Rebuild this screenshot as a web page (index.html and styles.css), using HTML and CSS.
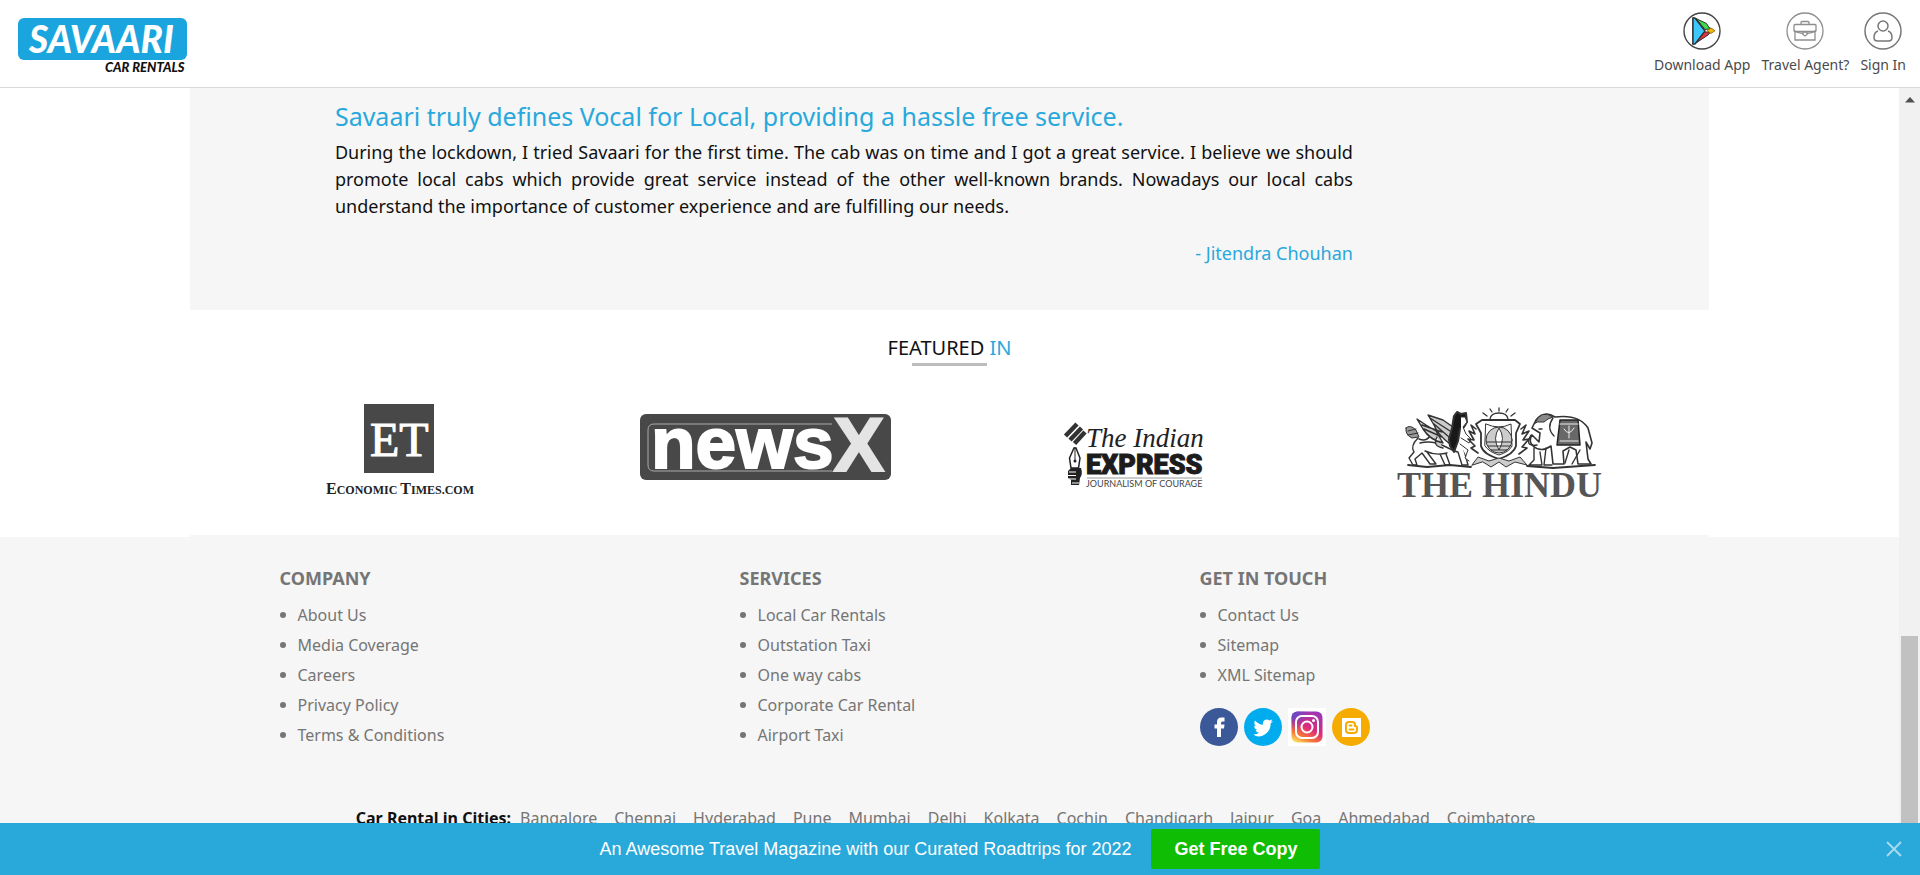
FILE: index.html
```html
<!DOCTYPE html>
<html lang="en">
<head>
<meta charset="utf-8">
<meta name="viewport" content="width=device-width, initial-scale=1">
<title>Savaari Car Rentals</title>
<link rel="stylesheet" href="styles.css">
</head>
<body>
<header class="topbar">
  <a class="brand" href="#" aria-label="Savaari Car Rentals">
    <svg width="172" height="60" viewBox="0 0 172 60">
      <rect x="2" y="3" width="169" height="42" rx="6" fill="#1ba5de"/>
      <text class="brand-name" x="13" y="38">SAVAARI</text>
      <text class="brand-sub" x="89" y="57">CAR RENTALS</text>
    </svg>
  </a>
  <nav class="topnav">
    <a class="topnav-link" href="#">
      <svg width="38" height="38" viewBox="0 0 38 38" fill="none" stroke-linejoin="round">
        <circle cx="19" cy="19" r="18" fill="#fff" stroke="#444" stroke-width="1.4"/>
        <path d="M10 6 30 18.500 10 32Z" fill="#fff" stroke="#333" stroke-width="1.500"/>
        <path d="M13 6.500 23.500 11.500 27 17 22 17.500Z" fill="#3ddc50" stroke="#333"/>
        <path d="M13 31 25 23 27 20 21 20Z" fill="#e5343d" stroke="#333"/>
        <path d="M10 6 12 6 22 19 12 32 10 32Z" fill="#3cc8ff" stroke="#333" stroke-width="1.400"/>
        <path d="M24 18.500 28 16 32 18.800 28 21.500Z" fill="#f5b800" stroke="#8a6a10" stroke-width=".8"/>
      </svg>
      <span>Download App</span>
    </a>
    <a class="topnav-link" href="#">
      <svg width="38" height="38" viewBox="0 0 38 38" fill="none" stroke="#8e8e8e" stroke-width="1.300">
        <circle cx="19" cy="19" r="18"/>
        <path d="M15 12V10.500Q15 9.500 16 9.500H22Q23 9.500 23 10.500V12"/>
        <rect x="8" y="12.500" width="22" height="7" rx="1"/>
        <path d="M9 20V28H29V20M8 18.500Q12 21.500 17 21.500M21 21.500Q26 21.500 30 18.500"/>
        <path d="M17 20H21V22.500L19 24 17 22.500Z"/>
      </svg>
      <span>Travel Agent?</span>
    </a>
    <a class="topnav-link" href="#">
      <svg width="38" height="38" viewBox="0 0 38 38" fill="none" stroke="#777" stroke-width="1.500">
        <circle cx="19" cy="19" r="18"/>
        <circle cx="19" cy="14" r="5"/>
        <path d="M14 19C11 20 10 22.500 10 25.500Q10 29 13.500 29H24.500Q28 29 28 25.500C28 22.500 27 20 24 19"/>
      </svg>
      <span>Sign In</span>
    </a>
  </nav>
</header>

<div class="viewport">
  <div class="page">
    <main class="panel">
      <section class="review">
        <div class="review-body">
          <h3 class="review-title">Savaari truly defines Vocal for Local, providing a hassle free service.</h3>
          <p class="review-text">During the lockdown, I tried Savaari for the first time. The cab was on time and I got a great service. I believe we should promote local cabs which provide great service instead of the other well-known brands. Nowadays our local cabs understand the importance of customer experience and are fulfilling our needs.</p>
          <p class="review-author">- Jitendra Chouhan</p>
        </div>
      </section>
      <section class="featured">
        <h2 class="featured-title">FEATURED <span class="accent">IN</span></h2>
        <div class="featured-logos">
          <svg width="260" height="106" viewBox="0 0 260 106" role="img" aria-label="Economic Times">
            <rect x="95" y="4" width="70" height="69" fill="#484848"/>
            <text class="et" x="101" y="56">ET</text>
            <text class="et-word" x="57" y="94"><tspan class="cap">E</tspan>CONOMIC <tspan class="cap">T</tspan>IMES.COM</text>
          </svg>
          <svg width="260" height="106" viewBox="0 0 260 106" role="img" aria-label="NewsX">
            <rect x="4" y="14" width="251" height="66" rx="6" fill="#484848"/>
            <path d="M196 24H18Q12 24 12 30V65Q12 71 18 71H196" fill="none" stroke="#aaa"/>
            <text class="newsx" x="15" y="68">news<tspan class="newsx-x" y="71">X</tspan></text>
          </svg>
          <svg width="260" height="106" viewBox="0 0 260 106" role="img" aria-label="The Indian Express">
            <g stroke="#333" stroke-width="4.500" fill="none">
              <path d="M62.500 36 74 24M67 40 78.500 28M71.500 43.500 82 32"/>
            </g>
            <path d="M73 48 77 58 75.500 68H68L66.500 58 71 48Z" fill="#fff" stroke="#222" stroke-width="1.500"/>
            <path d="M72 47V60" stroke="#222"/><circle cx="72" cy="61" r="1.500" fill="#222"/>
            <path d="M68 68H78Q80 74 77 78L76 85H68V80L65 78V71Z" fill="#222"/>
            <path d="M66 72H73M65 75.500H73M66 79H73M69 83H76" stroke="#fff"/>
            <text class="ie-top" x="83" y="47">The Indian</text>
            <text class="ie-main" x="83" y="74">EXPRESS</text>
            <path d="M84 78H199" stroke="#999"/>
            <text class="ie-sub" x="83" y="87">JOURNALISM OF COURAGE</text>
          </svg>
          <svg width="260" height="106" viewBox="0 0 260 106" role="img" aria-label="The Hindu">
            <g fill="none" stroke="#333" stroke-linecap="round" stroke-linejoin="round">
              <!-- winged figure -->
              <path d="M36 28Q40 24 46 30L49 37 42 38Q35 35 36 28Z" fill="#999"/>
              <path d="M38 31 46 29M38 35 48 33"/>
              <path d="M49 39Q56 42 60 36M48 38Q40 46 44 52L39 58 43 65H47L45 59 52 53 60 64H66L57 52M50 43Q62 40 74 46T88 52L92 65H98L94 50M70 54 75 65H80L76 54M55 51Q66 56 77 53" stroke-width="1.400"/>
              <path d="M47 19 56 25 66 31 73 43Q60 40 53 29ZM58 15 73 20 83 27 80 44Q68 35 64 25ZM52 25 72 32M54 29 72 37M60 18 80 31M64 24 79 37M67 37Q62 46 73 48" fill="#ccc" stroke-width="1.400"/>
              <path d="M84 16 87 12 91 14 96 13 97 22 94 27 90 29 88 41 84 52 80 46 79 39 82 28Z" fill="#181818" stroke-width="2"/>
              <path d="M91 17H95L97 22 93 27 96 34 101 39 99 43 91 38M90 44 98 50 95 58 99 61" fill="#fff"/>
              <!-- crest -->
              <path d="M112 20H145L150 24 146 33V46Q144 54 129 59Q113 54 111 46V33L106 24Z" fill="#fff" stroke-width="1.800"/>
              <path d="M116 24Q129 30 141 24L142 46Q139 52 129 55Q119 52 115 46Z"/>
              <circle cx="129" cy="40" r="13" fill="#ccc"/>
              <path d="M129 28Q136 38 129 50Q122 38 129 28M117 42H141M118 46H140M121 50H137" fill="#fff"/>
              <path d="M120 19Q121 13 129 13T138 19M129 11V8M122 12 120 9M136 12 138 9M117 16 113 13M141 16 145 13" stroke-width="1.300"/>
              <path d="M106 29 101 25 105 34 99 31 104 40 98 39 105 46 101 48 108 53M151 29 156 25 152 34 159 31 153 40 159 39 152 47 157 48 149 54" stroke-width="1.600"/>
              <path d="M102 65 108 57 119 61 129 58 139 61 150 57 157 65 145 62 136 67 129 62 121 67 113 62Z" fill="#ccc"/>
              <!-- elephant -->
              <path d="M166 20Q174 10 185 17Q209 14 218 28L222 43 220 49 216 42 218 59 221 64H208L206 50 200 47 193 51 194 64H183L181 46Q171 53 163 46Q158 41 162 35L166 39 169 42 170 33 162 28Z" fill="#fff" stroke-width="1.600"/>
              <path d="M165 23Q171 9 183 17L178 19 174 22 168 22Z" fill="#888"/>
              <path d="M183 18Q176 28 184 36M169 29H172M161 35Q154 47 167 45M164 48V60L159 65H172L170 52M176 48 174 65H182M199 50 195 63M210 50 202 64" stroke-width="1.400"/>
              <path d="M190 20H208L210 45H187Z" fill="#686868" stroke="#222" stroke-width="1.500"/>
              <path d="M190 24H208M190 41H208M194 29Q199 37 204 28M199 26V38" stroke="#eee"/>
              <path d="M38 65 57 67 80 65 101 67M157 66 183 68 225 65" stroke-width="1.800"/>
            </g>
            <text class="hindu" x="27" y="97">THE HINDU</text>
          </svg>
        </div>
      </section>
    </main>

    <footer class="footer">
      <div class="footer-cols">
        <section>
          <h4 class="footer-title">COMPANY</h4>
          <ul class="footer-list">
            <li><a href="#">About Us</a></li>
            <li><a href="#">Media Coverage</a></li>
            <li><a href="#">Careers</a></li>
            <li><a href="#">Privacy Policy</a></li>
            <li><a href="#">Terms &amp; Conditions</a></li>
          </ul>
        </section>
        <section>
          <h4 class="footer-title">SERVICES</h4>
          <ul class="footer-list">
            <li><a href="#">Local Car Rentals</a></li>
            <li><a href="#">Outstation Taxi</a></li>
            <li><a href="#">One way cabs</a></li>
            <li><a href="#">Corporate Car Rental</a></li>
            <li><a href="#">Airport Taxi</a></li>
          </ul>
        </section>
        <section>
          <h4 class="footer-title">GET IN TOUCH</h4>
          <ul class="footer-list">
            <li><a href="#">Contact Us</a></li>
            <li><a href="#">Sitemap</a></li>
            <li><a href="#">XML Sitemap</a></li>
          </ul>
          <div class="social">
            <a href="#" aria-label="Facebook"><svg width="38" height="38" viewBox="0 0 38 38"><circle cx="19" cy="19" r="19" fill="#3b5998"/><path d="M17 29V20.500H14.500V16.500H17V14Q17 9.500 21.500 9.500H24.500V13.500H22.500Q21 13.500 21 15V16.500H24.500L24 20.500H21V29Z" fill="#fff"/></svg></a>
            <a href="#" aria-label="Twitter"><svg width="38" height="38" viewBox="0 0 38 38"><circle cx="19" cy="19" r="19" fill="#00aced"/><path d="M29 13.500Q28 14.500 26.700 15C27 23 21 28.500 14.500 28.500Q11.500 28.500 9.500 26.500Q13 26.500 15 24.800Q12.500 24.500 11.500 22H13.200Q10.300 21 10.200 17.800L12 18.300Q9.300 16 11 12.500Q14.500 16.500 19 16.800Q18.300 12 22.500 11.400Q24.500 11.400 25.500 12.500L28.200 11.500Q27.800 12.800 26.700 13.800Z" fill="#fff"/></svg></a>
            <a href="#" aria-label="Instagram"><svg width="38" height="38" viewBox="0 0 38 38"><defs><linearGradient id="ig" x1=".75" y1="0" x2=".25" y2="1"><stop offset="0" stop-color="#9b36b7"/><stop offset=".5" stop-color="#dd2a7b"/><stop offset=".8" stop-color="#f77737"/><stop offset="1" stop-color="#fdd35a"/></linearGradient><radialGradient id="igb" cx="0" cy="0" r=".6"><stop offset="0" stop-color="#4b4fd8"/><stop offset="1" stop-color="#4b4fd8" stop-opacity="0"/></radialGradient></defs><path d="M0 0H38V38H0Z" fill="#fff"/><rect x="3.500" y="3.500" width="31" height="31" rx="6" fill="url(#ig)"/><rect x="3.500" y="3.500" width="31" height="31" rx="6" fill="url(#igb)"/><g fill="none" stroke="#fff" stroke-width="2"><rect x="8" y="8" width="22" height="22" rx="6"/><circle cx="19" cy="19" r="5.500"/></g><circle cx="25.500" cy="12.500" r="1.500" fill="#fff"/></svg></a>
            <a href="#" aria-label="Blogger"><svg width="38" height="38" viewBox="0 0 38 38"><circle cx="19" cy="19" r="19" fill="#f5ab00"/><path d="M10 10H29V29H10Z" fill="#fff"/><path d="M17 14H20Q23 14 23 16.500V18H23.500Q25 18 25 20V21.500Q25 25 21.500 25H17Q14 25 14 22V17Q14 14 17 14ZM17.500 17.500H19.500M17.500 21.500H21.500" fill="none" stroke="#f5ab00" stroke-width="2" stroke-linecap="round"/></svg></a>
          </div>
        </section>
      </div>
      <div class="cities">
        <strong class="cities-label">Car Rental in Cities:</strong>
        <a href="#">Bangalore</a><a href="#">Chennai</a><a href="#">Hyderabad</a><a href="#">Pune</a><a href="#">Mumbai</a><a href="#">Delhi</a><a href="#">Kolkata</a><a href="#">Cochin</a><a href="#">Chandigarh</a><a href="#">Jaipur</a><a href="#">Goa</a><a href="#">Ahmedabad</a><a href="#">Coimbatore</a>
      </div>
    </footer>
  </div>
  <div class="scrollbar" aria-hidden="true">
    <svg width="10" height="6" viewBox="0 0 10 6"><path d="M0 5.500 5 0 10 5.500Z" fill="#505050"/></svg>
    <div class="scrollbar-thumb"></div>
  </div>
</div>

<aside class="promo">
  <span>An Awesome Travel Magazine with our Curated Roadtrips for 2022</span>
  <button class="promo-button" type="button">Get Free Copy</button>
  <button class="promo-close" type="button" aria-label="Close"><svg width="16" height="16" viewBox="0 0 16 16"><path d="M1 1 15 15M15 1 1 15" stroke="#a5daf0" stroke-width="2"/></svg></button>
</aside>
</body>
</html>
```
FILE: styles.css
```css
* { box-sizing: border-box; }
body {
  margin: 0;
  height: 100vh;
  overflow: hidden;
  display: flex;
  flex-direction: column;
  font-family: "Noto Sans", sans-serif;
  font-size: 16px;
  color: #111;
  background: #fff;
}
h2, h3, h4, p, ul { margin: 0; padding: 0; }
a { color: inherit; text-decoration: none; }
svg { display: block; }

.topbar {
  flex: none;
  display: flex;
  justify-content: space-between;
  align-items: flex-start;
  height: 88px;
  padding: 12px 14px 0 16px;
  border-bottom: 1px solid #d9d9d9;
}
.brand { padding-top: 3px; }
.brand-name { font: italic 900 37px Lato, sans-serif; fill: #fff; }
.brand-sub { font: italic 900 13px Lato, sans-serif; fill: #111; }
.topnav { display: flex; gap: 11px; }
.topnav-link {
  display: flex;
  flex-direction: column;
  align-items: center;
  gap: 5px;
  font-size: 14px;
  line-height: 20px;
  color: #4a4a4a;
}

.viewport { flex: 1; min-height: 0; display: flex; }
.page { flex: 1; min-width: 0; overflow: hidden; }
.panel { width: 80%; margin: 0 auto; border-bottom: 2px solid #f6f6f6; }
.review { background: #f6f6f6; padding: 12px 0 43px 145px; }
.review-body { max-width: 1018px; }
.review-title { font-size: 25px; line-height: 33px; font-weight: 400; color: #29a8dc; padding-bottom: 6px; }
.review-text { font-size: 18px; line-height: 27px; text-align: justify; }
.review-author { padding-top: 20px; font-size: 18px; line-height: 27px; text-align: right; color: #29a8dc; }
.accent { color: #29a8dc; }

.featured { padding: 24px 26px 29px; }
.featured-title { font-size: 20px; line-height: 28px; font-weight: 400; text-align: center; }
.featured-title::after {
  content: "";
  display: block;
  width: 75px;
  height: 3px;
  margin: 1px auto 0;
  background: #bdbdbd;
}
.featured-logos {
  display: grid;
  grid-template-columns: repeat(4, 1fr);
  justify-items: center;
  padding-top: 34px;
}
.et { font: 48px "Liberation Serif", serif; fill: #fff; stroke: #fff; stroke-width: 1px; }
.et-word { font: bold 12px "Liberation Serif", serif; fill: #222; }
.cap { font-size: 16px; }
.newsx { font: bold 73px "Liberation Sans", sans-serif; fill: #fff; stroke: #fff; stroke-width: 2px; }
.newsx-x { font-size: 76px; fill: #e4e4e4; stroke: #e4e4e4; }
.ie-top { font: italic 27px "Liberation Serif", serif; fill: #222; }
.ie-main { font: 900 27px Roboto, sans-serif; fill: #1c1c1c; stroke: #1c1c1c; }
.ie-sub { font: 9px Lato, sans-serif; fill: #444; }
.hindu { font: bold 36px "Liberation Serif", serif; fill: #555; }

.footer { background: #f6f6f6; min-height: 400px; color: #757575; }
.footer-cols {
  display: grid;
  grid-template-columns: repeat(3, 1fr);
  column-gap: 40px;
  max-width: 1340px;
  margin: 0 auto;
  padding-top: 27px;
}
.footer-title { font-size: 18px; line-height: 28px; font-weight: 700; padding-bottom: 8px; }
.footer-list { list-style: none; line-height: 30px; }
.footer-list li { display: flex; align-items: center; gap: 12px; }
.footer-list li::before {
  content: "";
  width: 6px;
  height: 6px;
  border-radius: 50%;
  background: #757575;
}
.social { display: flex; gap: 6px; padding-top: 18px; }
.cities {
  display: flex;
  justify-content: center;
  gap: 17px;
  padding: 56px 8px 0 0;
  line-height: 24px;
}
.cities-label { color: #111; margin-right: -8px; }

.scrollbar {
  flex: none;
  width: 21px;
  background: #f1f1f1;
  display: flex;
  flex-direction: column;
  align-items: center;
  padding-top: 9px;
}
.scrollbar-thumb { flex: 1; width: 17px; margin-top: 533px; background: #c1c1c1; }

.promo {
  position: fixed;
  left: 0;
  right: 0;
  bottom: 0;
  height: 52px;
  display: flex;
  align-items: center;
  justify-content: center;
  gap: 20px;
  font: 18px "Liberation Sans", sans-serif;
  color: #fff;
  background: #29a8da;
}
.promo-button {
  height: 40px;
  padding: 0 23px;
  border: 0;
  border-radius: 2px;
  font: bold 18px "Liberation Sans", sans-serif;
  color: #fff;
  background: #0fbd05;
}
.promo-close {
  position: absolute;
  right: 18px;
  top: 18px;
  padding: 0;
  border: 0;
  background: none;
}
```
